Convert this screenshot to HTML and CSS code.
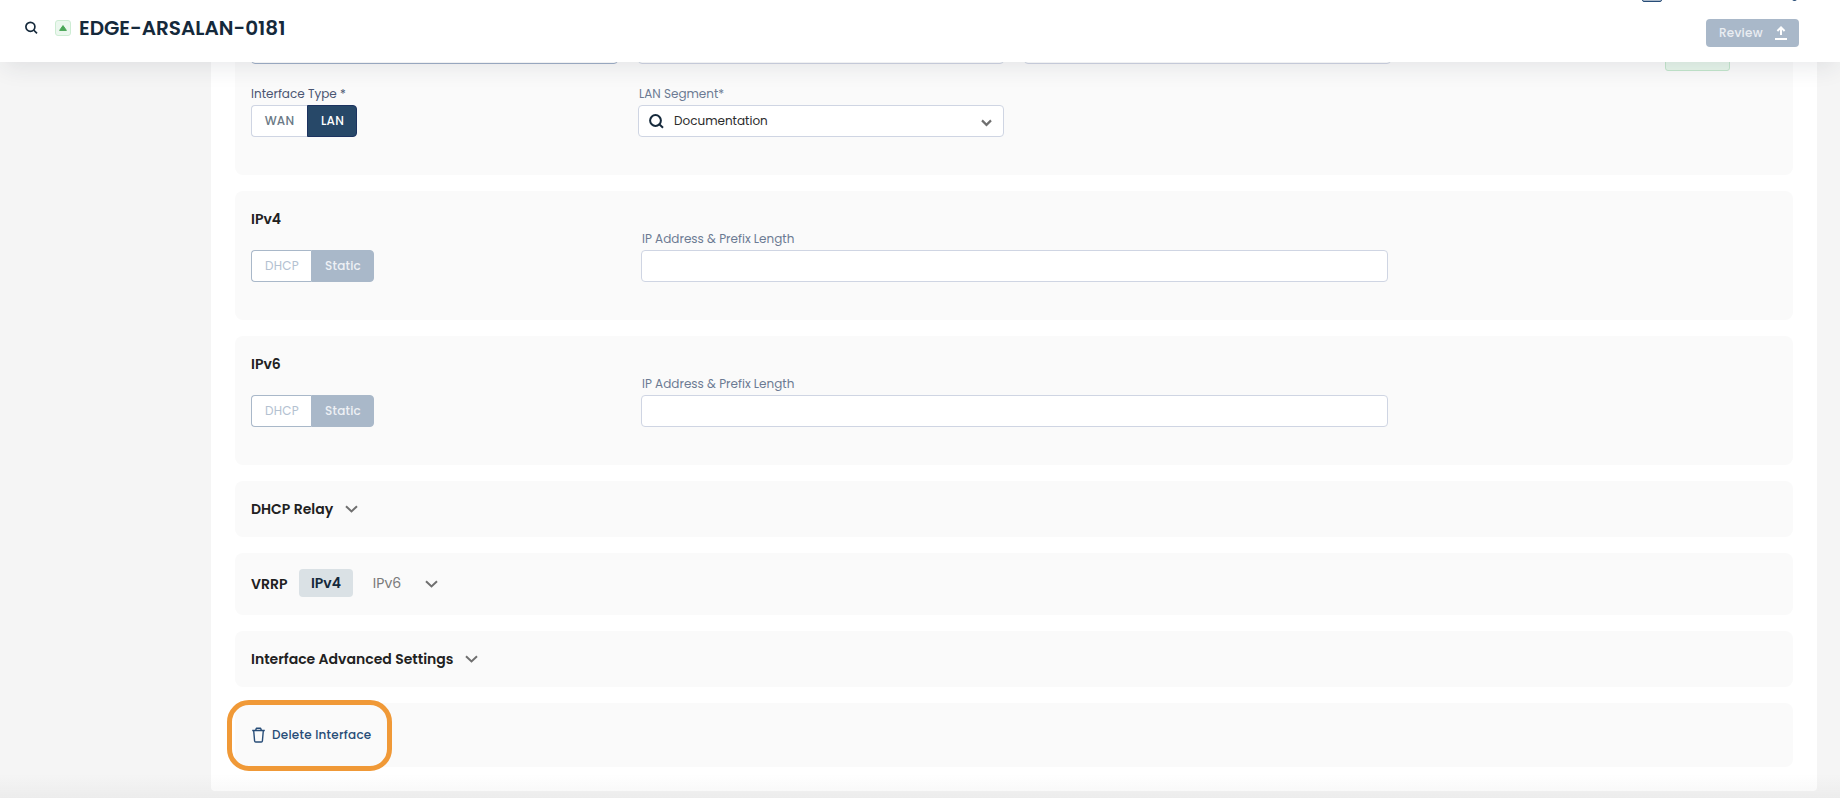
FILE: index.html
```html
<!DOCTYPE html>
<html lang="en">
<head>
    <meta charset="UTF-8">
    <meta name="viewport" content="width=device-width, initial-scale=1.0">
    <title>EDGE-ARSALAN-0181</title>
    <link rel="stylesheet" href="styles.css">
</head>
<body>

    <header class="topbar">
        <svg class="topbar__search" width="13" height="13" viewBox="0 0 13 13" fill="none" stroke="#15293b" stroke-width="1.7">
            <circle cx="5.4" cy="5.8" r="4.5"/>
            <path d="M8.6 9L12 12.4"/>
        </svg>
        <span class="topbar__status">
            <svg width="8" height="6" viewBox="0 0 8 6"><path d="M4 0.6L7.4 5.4H0.6Z" fill="#4aa657" stroke="#4aa657" stroke-width="1" stroke-linejoin="round"/></svg>
        </span>
        <h1 class="topbar__title">EDGE-ARSALAN-0181</h1>
        <button class="review" type="button" disabled>
            <span>Review</span>
            <svg width="12" height="14" viewBox="0 0 12 14" fill="none" stroke="#fff" stroke-width="2">
                <path d="M6 9V2M2.4 5L6 1.4L9.6 5M0 13H12"/>
            </svg>
        </button>
        <span class="topbar__box"></span>
        <span class="topbar__dot"></span>
    </header>

    <main class="panel">
        <section class="card card--general">
            <div class="row row--clipped">
                <div class="field"><div class="input input--active"></div></div>
                <div class="field"><div class="input"></div></div>
                <div class="field"><div class="input"></div></div>
                <span class="tag"></span>
            </div>
            <div class="row">
                <div class="field">
                    <label class="label label--type">Interface Type *</label>
                    <div class="toggle">
                        <button class="toggle__item toggle__item--wan" type="button">WAN</button>
                        <button class="toggle__item toggle__item--on toggle__item--lan" type="button">LAN</button>
                    </div>
                </div>
                <div class="field">
                    <label class="label label--segment">LAN Segment*</label>
                    <div class="input select">
                        <svg width="15" height="15" viewBox="0 0 15 15" fill="none" stroke="#15293b" stroke-width="2">
                            <circle cx="6.5" cy="6.5" r="5.4"/>
                            <path d="M10.3 10.3L14 13.7"/>
                        </svg>
                        <span class="select__value">Documentation</span>
                        <svg class="select__arrow" width="11" height="8" viewBox="0 0 11 8" fill="none" stroke="#6f6f6f" stroke-width="2.2">
                            <path d="M1 1.4L5.5 5.9L10 1.4"/>
                        </svg>
                    </div>
                </div>
            </div>
        </section>

        <section class="card card--ip">
            <h2 class="heading">IPv4</h2>
            <div class="ip-row">
                <div class="toggle toggle--disabled">
                    <button class="toggle__item toggle__item--dhcp" type="button" disabled>DHCP</button>
                    <button class="toggle__item toggle__item--on toggle__item--static" type="button" disabled>Static</button>
                </div>
                <div class="ip-row__field">
                    <label class="label">IP Address &amp; Prefix Length</label>
                    <div class="input"></div>
                </div>
            </div>
        </section>

        <section class="card card--ip">
            <h2 class="heading">IPv6</h2>
            <div class="ip-row">
                <div class="toggle toggle--disabled">
                    <button class="toggle__item toggle__item--dhcp" type="button" disabled>DHCP</button>
                    <button class="toggle__item toggle__item--on toggle__item--static" type="button" disabled>Static</button>
                </div>
                <div class="ip-row__field">
                    <label class="label">IP Address &amp; Prefix Length</label>
                    <div class="input"></div>
                </div>
            </div>
        </section>

        <section class="card card--relay">
            <h2 class="heading heading--relay">DHCP Relay</h2>
            <svg class="chevron" width="13" height="8" viewBox="0 0 13 8" fill="none" stroke="#6f6f6f" stroke-width="2"><path d="M1 1.2L6.5 6.4L12 1.2"/></svg>
        </section>

        <section class="card card--vrrp">
            <h2 class="heading heading--vrrp">VRRP</h2>
            <button class="tab tab--active" type="button">IPv4</button>
            <button class="tab" type="button">IPv6</button>
            <svg class="chevron" width="13" height="8" viewBox="0 0 13 8" fill="none" stroke="#6f6f6f" stroke-width="2"><path d="M1 1.2L6.5 6.4L12 1.2"/></svg>
        </section>

        <section class="card card--advanced">
            <h2 class="heading heading--advanced">Interface Advanced Settings</h2>
            <svg class="chevron" width="13" height="8" viewBox="0 0 13 8" fill="none" stroke="#6f6f6f" stroke-width="2"><path d="M1 1.2L6.5 6.4L12 1.2"/></svg>
        </section>

        <section class="card card--delete">
            <button class="delete" type="button">
                <svg width="13" height="16" viewBox="0 0 13 16" fill="none" stroke="#274c77" stroke-width="1.4" stroke-linejoin="round">
                    <path d="M0.2 3.5H12.8M3.6 3.3L4.4 1.2H8.6L9.4 3.3M1.7 3.7L2.6 14Q2.7 15 3.7 15H9.3Q10.3 15 10.4 14L11.3 3.7"/>
                </svg>
                <span>Delete Interface</span>
            </button>
            <span class="highlight"></span>
        </section>
    </main>

    <div class="bottom-shade"></div>

</body>
</html>
```
FILE: styles.css
```css
* {
    box-sizing: border-box;
}

body {
    margin: 0;
    height: 798px;
    overflow: hidden;
    background: #f5f5f5;
    color: #212121;
    font-family: Poppins, Inter, sans-serif;
    font-size: 12px;
}

button {
    margin: 0;
    padding: 0;
    border: none;
    background: none;
    font: inherit;
    color: inherit;
}

svg {
    display: block;
    flex: none;
}

/* Top bar */
.topbar {
    position: relative;
    z-index: 2;
    display: flex;
    align-items: flex-start;
    height: 62px;
    padding: 0 41px 0 25px;
    background: #fff;
    box-shadow: 0 8px 24px -4px rgba(35, 50, 65, 0.11);
}

.topbar__search {
    margin-top: 21px;
}

.topbar__status {
    display: flex;
    align-items: center;
    justify-content: center;
    width: 16px;
    height: 16px;
    margin: 20px 0 0 17px;
    border: 1px solid #cdecd3;
    border-radius: 3px;
    background: #ebf7ee;
}

.topbar__title {
    margin: 14px 0 0 8px;
    font-size: 20px;
    line-height: 28px;
    font-weight: 600;
    color: #15293b;
    white-space: nowrap;
}

/* Ends of the items that are scrolled off the top */
.topbar__box {
    position: absolute;
    top: -10px;
    left: 1642px;
    width: 20px;
    height: 12px;
    border: 1px solid #274c77;
    border-radius: 2px;
    background: #a9b8c9;
}

.topbar__dot {
    position: absolute;
    top: -4px;
    left: 1792px;
    width: 5px;
    height: 5px;
    border-radius: 50%;
    background: #274c77;
}

.review {
    display: flex;
    align-items: center;
    justify-content: space-between;
    width: 93px;
    height: 28px;
    margin: 19px 0 0 auto;
    padding: 0 12px 0 13px;
    border-radius: 4px;
    background: #a9b8c9;
    color: #e9edf2;
    font-weight: 500;
    letter-spacing: 0.24px;
}

/* Panel and cards */
.panel {
    display: flex;
    flex-direction: column;
    gap: 16px;
    width: 1606px;
    height: 769px;
    margin: -40px 0 0 211px;
    padding: 0 24px 24px;
    border-radius: 4px;
    background: #fff;
}

.card {
    flex: none;
    padding: 0 16px;
    border-radius: 8px;
    background: #fafafa;
}

.card--general {
    height: 153px;
    padding-top: 10px;
}

.card--ip {
    height: 129px;
}

.card--relay,
.card--vrrp,
.card--advanced {
    display: flex;
    align-items: center;
    height: 56px;
}

.card--vrrp {
    height: 62px;
}

.card--delete {
    position: relative;
    height: 64px;
}

/* Fields */
.row {
    display: grid;
    grid-template-columns: 366px 366px 366px;
    column-gap: 21px;
}

.row--clipped {
    grid-template-columns: 367px 366px 367px 65px;
    column-gap: 20px;
    height: 53px;
}

.tag {
    width: 65px;
    height: 39px;
    margin-left: 254px;
    border: 1px solid #c3e6cc;
    border-radius: 3px;
    background: #e6f5ea;
}

.label {
    display: block;
    height: 20px;
    line-height: 18px;
    color: #6c7a93;
    white-space: nowrap;
}

.label--type {
    color: #4b5672;
}

.label--segment {
    padding-left: 1px;
    line-height: 17px;
}

.input {
    height: 32px;
    border: 1px solid #cfd5e3;
    border-radius: 4px;
    background: #fff;
}

.input--active {
    border-color: #9fb0c8;
}

.select {
    display: flex;
    align-items: center;
    padding: 0 11px 0 10px;
}

.select__value {
    margin-left: 10px;
    color: #2b2b2b;
}

.select__arrow {
    margin: 3px 0 0 auto;
}

/* Toggle buttons */
.toggle {
    display: flex;
    height: 32px;
}

.toggle__item {
    padding-left: 1px;
    border: 1px solid #cfd5e3;
    border-right: none;
    border-radius: 4px 0 0 4px;
    background: #fff;
    color: #6b7985;
    font-weight: 500;
    letter-spacing: 0.24px;
}

.toggle__item--on {
    border: 1px solid #1c3360;
    border-radius: 0 4px 4px 0;
    background: #274868;
    color: #fff;
}

.toggle__item--wan {
    width: 56px;
    padding-left: 0;
}

.toggle__item--lan {
    width: 50px;
}

.toggle__item--dhcp {
    width: 60px;
}

.toggle__item--static {
    width: 63px;
}

.toggle--disabled .toggle__item {
    border-color: #a9b8c9;
    color: #b3c1d1;
    font-weight: 400;
}

.toggle--disabled .toggle__item--on {
    background: #a9b8c9;
    color: #eef1f5;
    font-weight: 500;
}

/* IPv4 and IPv6 */
.heading {
    margin: 0;
    font-size: 14px;
    line-height: 20px;
    font-weight: 600;
    white-space: nowrap;
}

.card--ip .heading {
    padding-top: 18px;
}

.ip-row {
    display: flex;
    align-items: flex-end;
    height: 53px;
}

.ip-row__field {
    width: 747px;
    margin-left: 267px;
}

.ip-row__field .label {
    padding-left: 1px;
}

/* Collapsed sections */
.heading--relay {
    width: 94px;
}

.heading--vrrp {
    width: 48px;
}

.heading--advanced {
    width: 214px;
}

.card--vrrp .chevron {
    margin-left: 11px;
}

.tab {
    width: 54px;
    height: 28px;
    margin-bottom: 2px;
    border-radius: 4px;
    font-size: 14px;
    color: #7a7a7a;
}

.tab--active {
    margin-right: 7px;
    background: #dae1e5;
    color: #15293b;
    font-weight: 600;
}

/* Delete */
.delete {
    display: flex;
    align-items: center;
    gap: 7px;
    height: 63px;
    padding-left: 1px;
    color: #274c77;
    font-weight: 500;
    letter-spacing: 0.24px;
}

.highlight {
    position: absolute;
    top: -3px;
    left: -8px;
    width: 165px;
    height: 71px;
    border: 5px solid #f09937;
    border-radius: 22px;
}

/* Soft shade along the bottom edge of the window */
.bottom-shade {
    position: fixed;
    z-index: 2;
    right: 0;
    bottom: 0;
    left: 0;
    height: 24px;
    background: linear-gradient(rgba(35, 35, 35, 0), rgba(35, 35, 35, 0.04));
}
```
